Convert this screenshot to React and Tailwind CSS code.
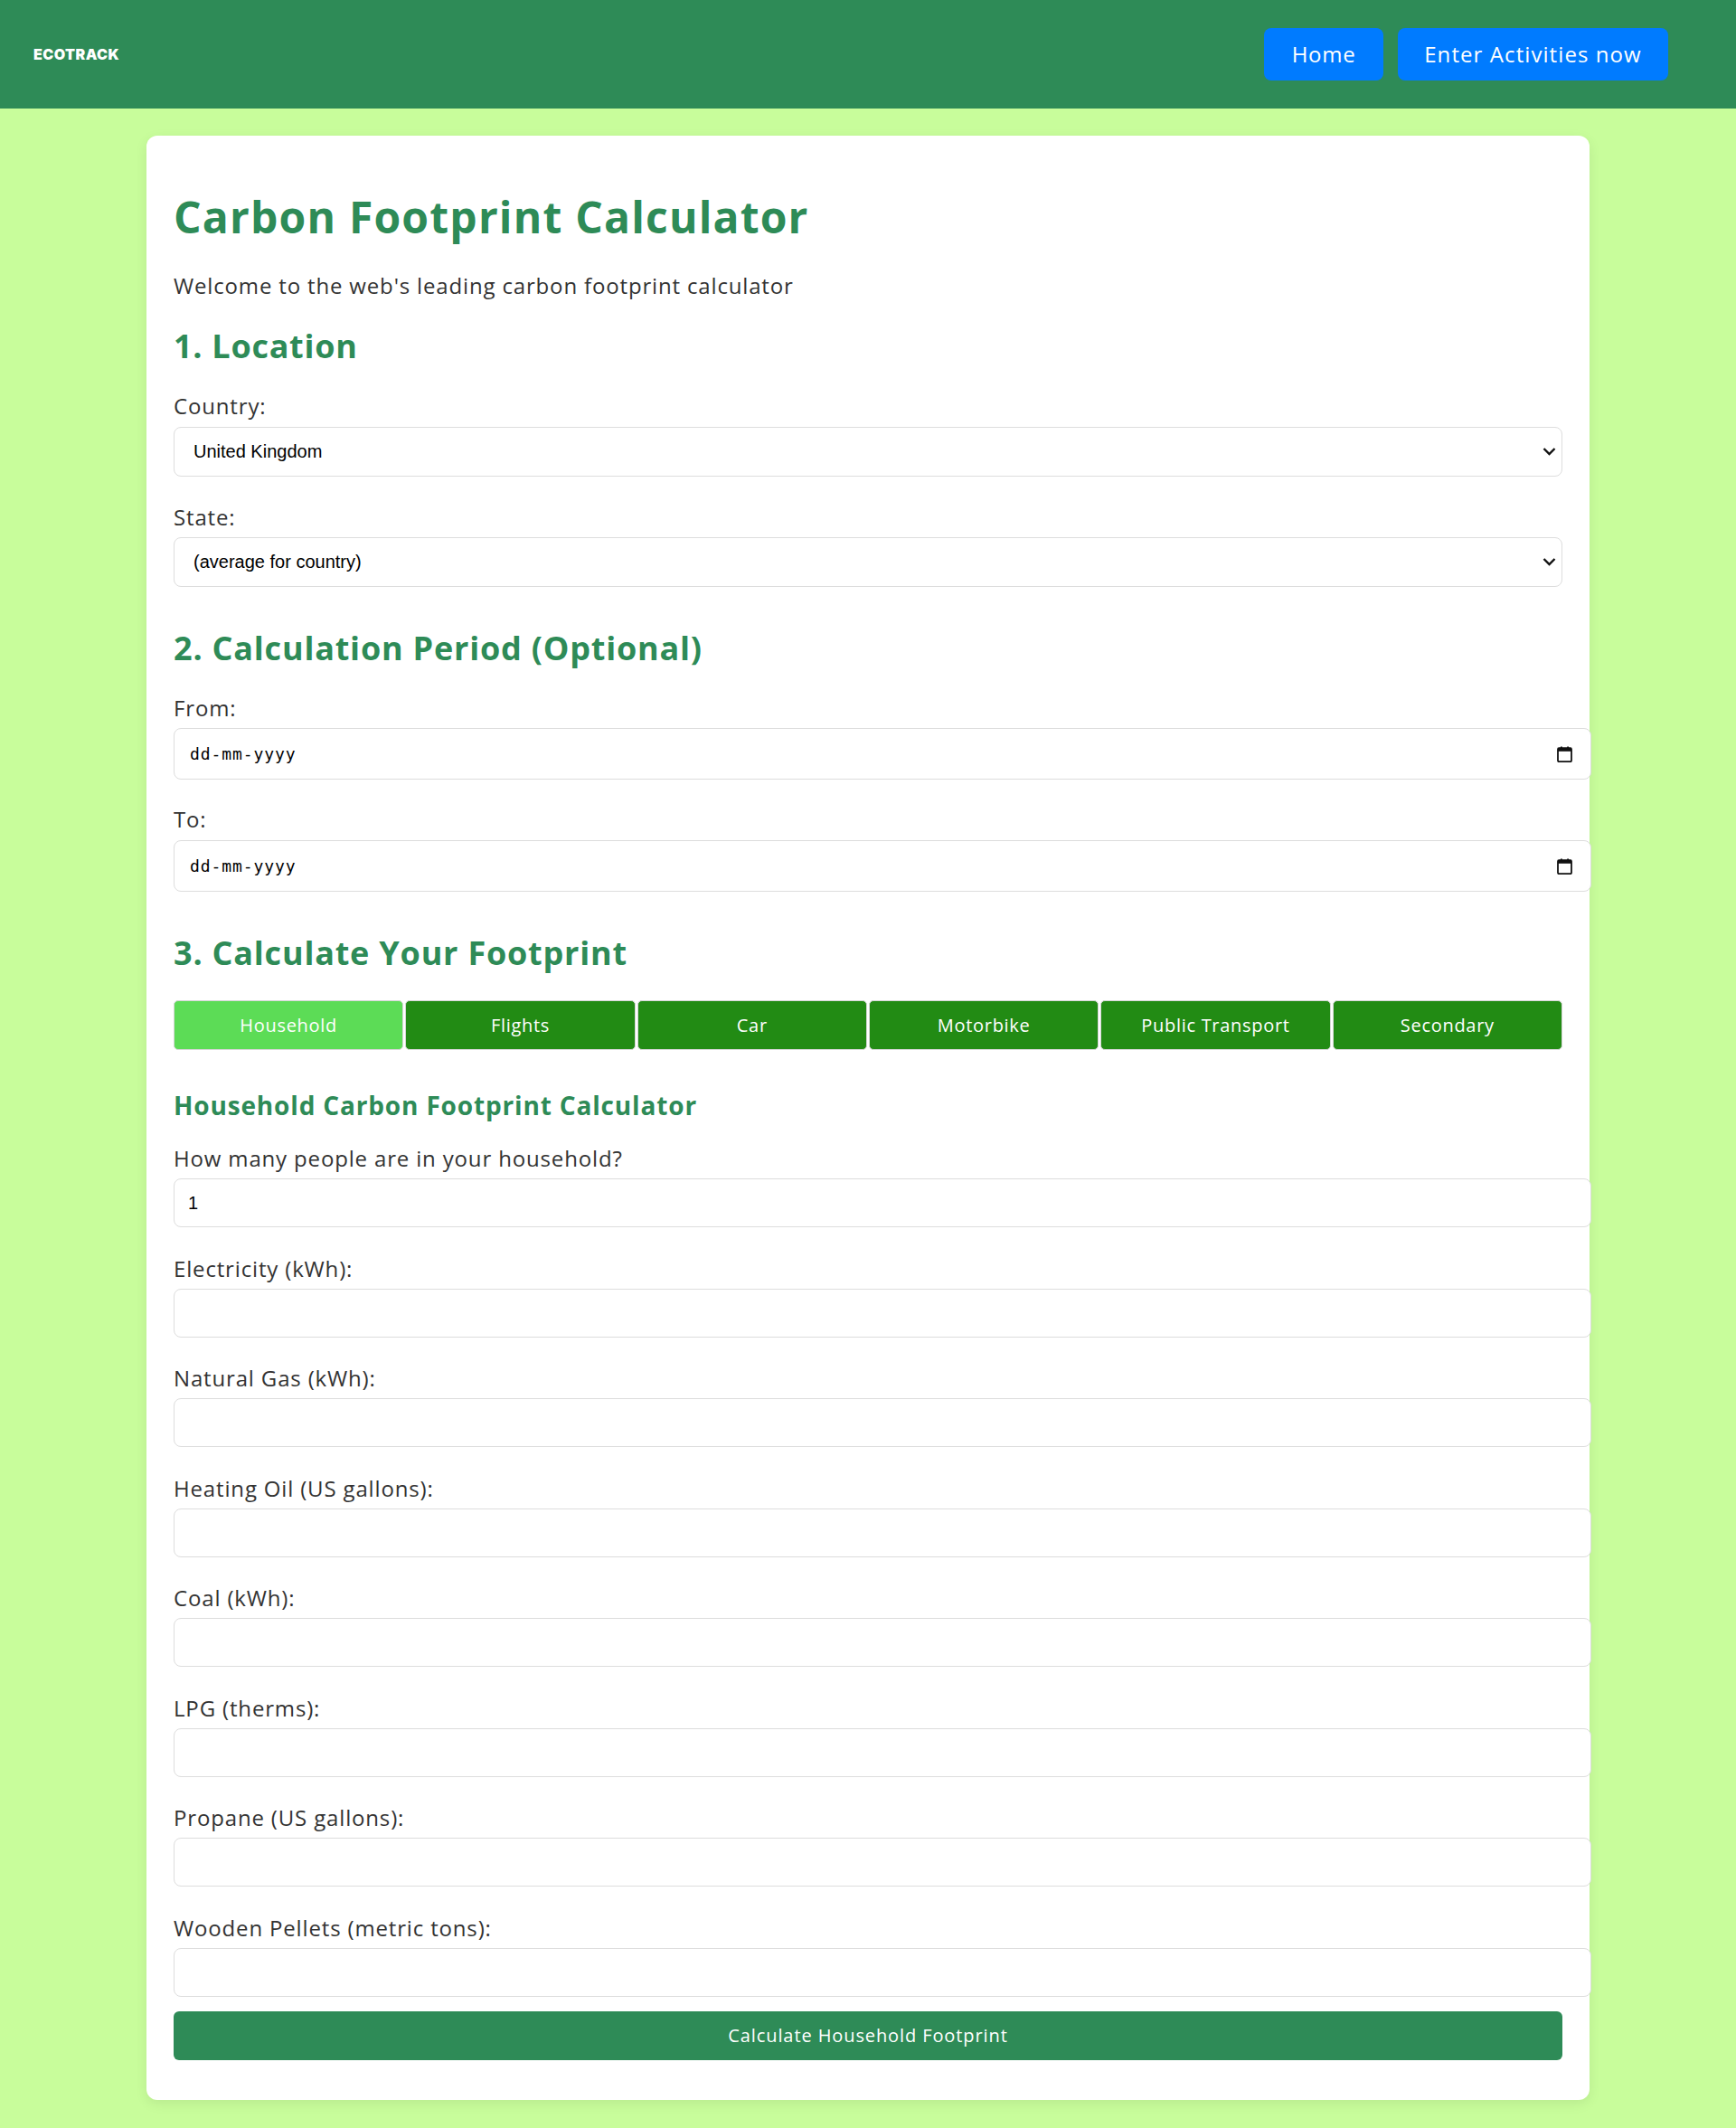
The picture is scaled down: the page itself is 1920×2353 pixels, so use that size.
import { useState } from 'react'

const TABS = ['Household', 'Flights', 'Car', 'Motorbike', 'Public Transport', 'Secondary']

const FIELDS = [
  { label: 'How many people are in your household?', value: '1' },
  { label: 'Electricity (kWh):' },
  { label: 'Natural Gas (kWh):' },
  { label: 'Heating Oil (US gallons):' },
  { label: 'Coal (kWh):' },
  { label: 'LPG (therms):' },
  { label: 'Propane (US gallons):' },
  { label: 'Wooden Pellets (metric tons):' },
]

function Chevron() {
  return (
    <svg width="15" height="10" viewBox="0 0 15 10" className="absolute right-[7px] top-1/2 -translate-y-1/2 pointer-events-none">
      <polyline points="1.5,2 7.5,8 13.5,2" fill="none" stroke="#111" strokeWidth="2.4" />
    </svg>
  )
}

function CalendarIcon() {
  return (
    <svg width="17" height="18" viewBox="0 0 17 18">
      <path d="M4 0.5h1.8v2.5H4zM11.2 0.5H13v2.5h-1.8z" fill="#111" />
      <rect x="1" y="2.2" width="15" height="15" rx="1.2" fill="none" stroke="#111" strokeWidth="1.8" />
      <rect x="1" y="2.2" width="15" height="3.6" fill="#111" />
    </svg>
  )
}

function Select({ value }) {
  return (
    <div className="relative">
      <select
        defaultValue={value}
        className="w-full h-[55px] appearance-none bg-white border border-[#ddd] rounded-lg pl-[21px] font-['Liberation_Sans',Arial,sans-serif] text-[20px] text-black outline-none"
      >
        <option>{value}</option>
      </select>
      <Chevron />
    </div>
  )
}

function DateField() {
  return (
    <div className="w-[1568px] h-[57px] bg-white border border-[#ddd] rounded-lg flex items-center justify-between pl-[17px] pr-[20px]">
      <span className="font-['DejaVu_Sans_Mono',monospace] text-[18px] text-black tracking-[0.05em]">dd-mm-yyyy</span>
      <CalendarIcon />
    </div>
  )
}

export default function App() {
  const [tab, setTab] = useState('Household')

  return (
    <div className="min-h-screen bg-[#c8fd9b] font-['Open_Sans',sans-serif] text-[#333]">
      <header className="h-[120px] bg-[#2e8b57] flex items-center justify-between pl-[37px] pr-[75px]">
        <span className="font-['Inter',sans-serif] font-black text-[16px] tracking-[0.03em] text-white">ECOTRACK</span>
        <nav className="flex gap-4">
          <button className="w-[132px] h-[58px] rounded-lg bg-[#007bff] text-white text-[24px] tracking-[0.03em]">Home</button>
          <button className="w-[299px] h-[58px] rounded-lg bg-[#007bff] text-white text-[24px] tracking-[0.045em]">Enter Activities now</button>
        </nav>
      </header>

      <main className="py-[30px]">
        <div className="w-[1596px] mx-auto bg-white rounded-xl shadow-[0_4px_14px_rgba(0,0,0,0.08)] px-[30px] pt-8 pb-[44px]">
          <h1 className="mt-[29px] text-[48px] leading-[58px] font-bold text-[#2e8b57] tracking-[0.025em]">Carbon Footprint Calculator</h1>
          <p className="mt-[32px] text-[24px] leading-[30px] tracking-[0.035em]">Welcome to the web's leading carbon footprint calculator</p>

          <h2 className="mt-[29.5px] text-[36px] leading-[44px] font-bold text-[#2e8b57] tracking-[0.02em]">1. Location</h2>
          <label className="block mt-[29px] text-[24px] leading-[30px] tracking-[0.035em]">Country:</label>
          <div className="mt-[8px]"><Select value="United Kingdom" /></div>
          <label className="block mt-[30px] text-[24px] leading-[30px] tracking-[0.035em]">State:</label>
          <div className="mt-[7px]"><Select value="(average for country)" /></div>

          <h2 className="mt-[46.5px] text-[36px] leading-[44px] font-bold text-[#2e8b57] tracking-[0.022em]">2. Calculation Period (Optional)</h2>
          <label className="block mt-[29px] text-[24px] leading-[30px] tracking-[0.035em]">From:</label>
          <div className="mt-[7px]"><DateField /></div>
          <label className="block mt-[29px] text-[24px] leading-[30px] tracking-[0.035em]">To:</label>
          <div className="mt-[8px]"><DateField /></div>

          <h2 className="mt-[46px] text-[36px] leading-[44px] font-bold text-[#2e8b57] tracking-[0.022em]">3. Calculate Your Footprint</h2>
          <div className="mt-[30px] flex gap-[2px]">
            {TABS.map(t => (
              <button
                key={t}
                onClick={() => setTab(t)}
                className={
                  t === tab
                    ? 'flex-1 h-[55px] rounded-[5px] border border-[#d6d6d6] bg-[#5cdc56] text-white text-[20px] tracking-[0.035em]'
                    : 'flex-1 h-[55px] rounded-[5px] border border-[#d6d6d6] bg-[#228b14] text-white text-[20px] tracking-[0.035em]'
                }
              >
                {t}
              </button>
            ))}
          </div>

          <h3 className="mt-[44px] text-[28px] leading-[34px] font-bold text-[#2e8b57] tracking-[0.03em]">Household Carbon Footprint Calculator</h3>
          {FIELDS.map((f, i) => (
            <div key={f.label} className={i === 0 ? 'mt-[27px]' : 'mt-[30.5px]'}>
              <label className="block text-[24px] leading-[30px] tracking-[0.035em]">{f.label}</label>
              <input
                type="text"
                defaultValue={f.value || ''}
                className="mt-[7px] block w-[1568px] h-[54px] bg-white border border-[#ddd] rounded-lg px-[15px] font-['Liberation_Sans',Arial,sans-serif] text-[20px] text-black outline-none"
              />
            </div>
          ))}

          <button className="mt-[16px] w-full h-[54px] rounded-md bg-[#2e8b57] text-white text-[20px] tracking-[0.045em]">Calculate Household Footprint</button>
        </div>
      </main>
    </div>
  )
}
